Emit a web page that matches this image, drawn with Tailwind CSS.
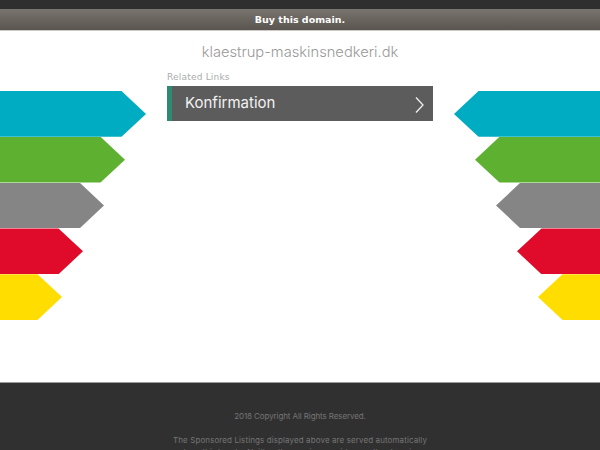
<!DOCTYPE html>
<html>
<head>
  <meta charset="utf-8">
  <meta name="viewport" content="width=device-width">
  <title>klaestrup-maskinsnedkeri.dk</title>
  <script src="https://cdn.jsdelivr.net/npm/@tailwindcss/browser@4"></script>
</head>
<body class="h-[450px] overflow-hidden bg-white font-['Inter',sans-serif]">
  <div class="h-[9px] bg-[#2f2f2f]"></div>
  <div class="h-[22px] border-b border-[#cfcac4] bg-gradient-to-b from-[#7a746e] to-[#5a5550] text-center font-['DejaVu_Sans',sans-serif] text-[9.5px] leading-[21px] font-bold text-white">Buy this domain.</div>

  <div class="grid h-[351px] grid-cols-[146px_1fr_146px]">
    <!-- left arrows -->
    <div class="flex flex-col items-start pt-[60px]">
      <div class="h-[45.8px] w-[146px] bg-[#00acc1] [clip-path:polygon(0_0,121.5px_0,100%_50%,121.5px_100%,0_100%)]"></div>
      <div class="h-[45.8px] w-[125px] bg-[#5eb130] [clip-path:polygon(0_0,100.5px_0,100%_50%,100.5px_100%,0_100%)]"></div>
      <div class="h-[45.8px] w-[104px] bg-[#858585] [clip-path:polygon(0_0,79.5px_0,100%_50%,79.5px_100%,0_100%)]"></div>
      <div class="h-[45.8px] w-[83px] bg-[#e00a2b] [clip-path:polygon(0_0,58.5px_0,100%_50%,58.5px_100%,0_100%)]"></div>
      <div class="h-[45.8px] w-[62px] bg-[#ffdd00] [clip-path:polygon(0_0,37.5px_0,100%_50%,37.5px_100%,0_100%)]"></div>
    </div>

    <div class="flex flex-col items-center pt-[10px]">
      <h1 class="text-[14.7px] leading-[22px] font-light text-[#999999]">klaestrup-maskinsnedkeri.dk</h1>
      <div class="mt-[8px] w-[266px]">
        <p class="font-['DejaVu_Sans',sans-serif] text-[9px] leading-[13px] tracking-[0.2px] text-[#ababab]">Related Links</p>
        <a href="#" class="mt-[2px] flex h-[35px] items-center justify-between border-l-[5px] border-[#2f8a74] bg-[#5c5c5c] pr-[9px] pl-[13px] text-[15px] text-[#f2f2f2]">
          Konfirmation
          <svg class="h-[20px] w-[10px]" viewBox="0 0 10 20" fill="none" stroke="#f0f0f0" stroke-width="1.3"><path d="M2 3.5L9 11L2 18.5"/></svg>
        </a>
      </div>
    </div>

    <!-- right arrows -->
    <div class="flex flex-col items-end pt-[60px]">
      <div class="h-[45.8px] w-[146px] bg-[#00acc1] [clip-path:polygon(100%_0,24.5px_0,0_50%,24.5px_100%,100%_100%)]"></div>
      <div class="h-[45.8px] w-[125px] bg-[#5eb130] [clip-path:polygon(100%_0,24.5px_0,0_50%,24.5px_100%,100%_100%)]"></div>
      <div class="h-[45.8px] w-[104px] bg-[#858585] [clip-path:polygon(100%_0,24.5px_0,0_50%,24.5px_100%,100%_100%)]"></div>
      <div class="h-[45.8px] w-[83px] bg-[#e00a2b] [clip-path:polygon(100%_0,24.5px_0,0_50%,24.5px_100%,100%_100%)]"></div>
      <div class="h-[45.8px] w-[62px] bg-[#ffdd00] [clip-path:polygon(100%_0,24.5px_0,0_50%,24.5px_100%,100%_100%)]"></div>
    </div>
  </div>

  <footer class="h-[68px] overflow-hidden border-t border-[#9a9a9a] bg-[#303030] pt-[27px] text-center text-[8px] leading-[12px] text-[#757575]">
    <p class="tracking-[-0.1px]">2018 Copyright All Rights Reserved.</p>
    <p class="mx-auto mt-[12px] w-[256px] tracking-[0.1px]">The Sponsored Listings displayed above are served automatically by a third party. Neither the service provider nor the domain owner maintain any relationship with the advertisers.</p>
  </footer>
</body>
</html>
